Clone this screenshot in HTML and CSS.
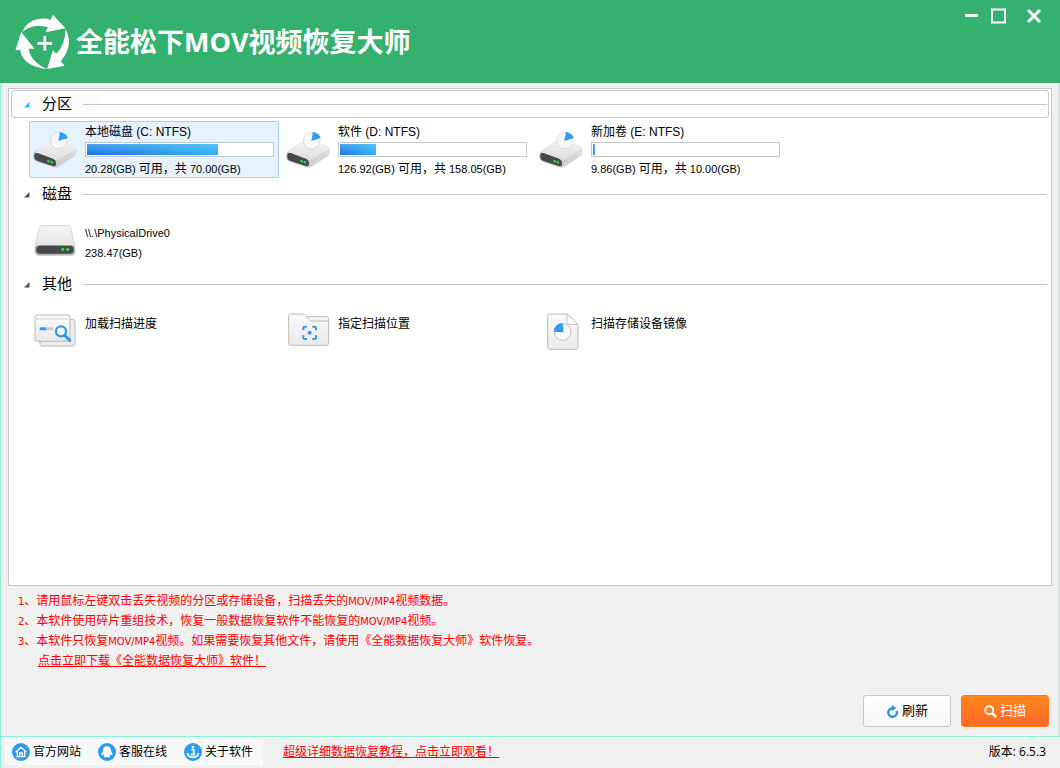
FILE: index.html
```html
<!DOCTYPE html>
<html lang="zh-CN">
<head>
<meta charset="utf-8">
<title>全能松下MOV视频恢复大师</title>
<link rel="stylesheet" href="styles.css">
</head>
<body>
<svg class="defs" aria-hidden="true">
  <defs>
    <linearGradient id="metal" x1="0" y1="0" x2="0" y2="1"><stop offset="0" stop-color="#f6f6f6"/><stop offset="1" stop-color="#dcdcdc"/></linearGradient>
    <linearGradient id="side" x1="0" y1="0" x2="1" y2="0"><stop offset="0" stop-color="#b9b9b9"/><stop offset="1" stop-color="#dedede"/></linearGradient>
    <linearGradient id="paper" x1="0" y1="0" x2="0" y2="1"><stop offset="0" stop-color="#fbfbfb"/><stop offset="1" stop-color="#e9e9e9"/></linearGradient>
    <symbol id="volume" viewBox="0 0 132 114">
      <path d="M1 72q0-9 9-14L56 28q5-3 11-1l54 17q10 4 10 13v6q0 9-7 14l-50 31q-6 4-14 1L12 92Q1 88 1 80z" fill="url(#side)"/>
      <path d="M10 57 56 28q5-3 11-1l54 17q12 5 3 12L78 86q-5 4-12 1L12 68q-8-5-2-11z" fill="url(#metal)"/>
      <path d="M4 73q0-9 10-7l46 17q9 4 9 12v4q0 9-10 6L14 90Q4 86 4 77z" fill="#45484a"/>
      <path d="m43 86 7 2v7l-7-2zM53 89l7 2v7l-7-2z" fill="#35d643"/>
      <circle cx="77" cy="29" r="25" fill="#f7f7f7" stroke="#cfcfcf" stroke-width="2"/>
      <path d="M76 30 81 2q20 6 23 19z" fill="#2f9bee"/>
    </symbol>
    <symbol id="tri" viewBox="0 0 7 7"><path d="M1 6.500 6.500 1v5.500z" fill="currentColor"/></symbol>
  </defs>
</svg>
<div class="window">
  <header class="titlebar">
    <svg class="logo" viewBox="44 38 164 168" aria-hidden="true">
      <g fill="#fff">
        <path d="M65 92Q80 58 113 53 136 49 150 56L157 40 195 81 135 93 142 78Q100 64 65 92z"/>
        <path d="M62 92 45 147 59 145Q65 194 140 203 89 181 85 142L102 142z"/>
        <path d="M140 203 157 147 167 157Q195 130 195 83 222 129 181 180L192 193z"/>
        <path d="M111 122h18v-18h8v18h18v8h-18v18h-8v-18h-18z"/>
      </g>
    </svg>
    <h1 class="title">全能松下<span class="latin">MOV</span>视频恢复大师</h1>
    <div class="controls">
      <button class="control" aria-label="最小化"><svg viewBox="0 0 16 16"><path d="M2 7.500h13" stroke="#fff" stroke-width="3"/></svg></button>
      <button class="control" aria-label="最大化"><svg viewBox="0 0 16 16"><path d="M1 1.500h13v13H1z" fill="none" stroke="#fff" stroke-width="2"/></svg></button>
      <button class="control last" aria-label="关闭"><svg viewBox="0 0 16 16"><path d="m2 2 12 12m0-12L2 14" stroke="#fff" stroke-width="3"/></svg></button>
    </div>
  </header>

  <main class="body">
    <div class="panel">
      <section>
        <button class="heading active"><svg class="tri"><use href="#tri"/></svg><span>分区</span><i class="rule"></i></button>
        <div class="items">
          <button class="item selected">
            <span class="pic"><svg width="44" height="38"><use href="#volume"/></svg></span>
            <span class="info"><span class="name">本地磁盘 (C: NTFS)</span>
            <span class="bar"><span class="fill" style="width:71%"></span></span>
            <span class="size">20.28(GB) <span class="cn">可用，共</span> 70.00(GB)</span></span>
          </button>
          <button class="item">
            <span class="pic"><svg width="44" height="38"><use href="#volume"/></svg></span>
            <span class="info"><span class="name">软件 (D: NTFS)</span>
            <span class="bar"><span class="fill" style="width:19.5%"></span></span>
            <span class="size">126.92(GB) <span class="cn">可用，共</span> 158.05(GB)</span></span>
          </button>
          <button class="item">
            <span class="pic"><svg width="44" height="38"><use href="#volume"/></svg></span>
            <span class="info"><span class="name">新加卷 (E: NTFS)</span>
            <span class="bar"><span class="fill" style="width:1.2%"></span></span>
            <span class="size">9.86(GB) <span class="cn">可用，共</span> 10.00(GB)</span></span>
          </button>
        </div>
      </section>
      <section>
        <button class="heading"><svg class="tri"><use href="#tri"/></svg><span>磁盘</span><i class="rule"></i></button>
        <div class="items">
          <button class="item">
            <span class="pic low"><svg width="42" height="32" viewBox="0 0 126 96">
              <path d="M16 8Q18 2 25 2h76q7 0 9 6l13 56v15q0 12-12 12H15Q3 91 3 79V64z" fill="url(#metal)" stroke="#c4c4c4" stroke-width="2"/>
              <path d="M3 72q0-12 12-12h96q12 0 12 12v7q0 12-12 12H15Q3 91 3 79z" fill="#b5b5b5"/>
              <rect x="7" y="62" width="112" height="24" rx="10" fill="#45484a"/>
              <circle cx="86" cy="73" r="5" fill="#35d643"/><circle cx="101" cy="73" r="5" fill="#35d643"/>
            </svg></span>
            <span class="info lines"><span>\\.\PhysicalDrive0</span><span>238.47(GB)</span></span>
          </button>
        </div>
      </section>
      <section>
        <button class="heading"><svg class="tri"><use href="#tri"/></svg><span>其他</span><i class="rule"></i></button>
        <div class="items">
          <button class="item">
            <span class="pic low"><svg width="42" height="34" viewBox="0 0 126 102">
              <rect x="18" y="17" width="105" height="79" rx="6" fill="#ededed" stroke="#bcbcbc" stroke-width="3"/>
              <rect x="3" y="3" width="105" height="79" rx="6" fill="url(#paper)" stroke="#bcbcbc" stroke-width="3"/>
              <path d="M5 15h101" stroke="#d0d0d0" stroke-width="3"/>
              <path d="M35 40h23v9H35z" fill="#ccc"/><path d="M17 40h19v9H17z" fill="#2f9bee"/>
              <circle cx="81" cy="52" r="15" fill="#fff" stroke="#2f9bee" stroke-width="7"/>
              <path d="m92 64 15 15" stroke="#2f9bee" stroke-width="9" stroke-linecap="round"/>
            </svg></span>
            <span class="info lines"><span class="name">加载扫描进度</span></span>
          </button>
          <button class="item">
            <span class="pic folder"><svg width="42" height="34" viewBox="0 0 126 102">
              <path d="M56 11h60q6 0 6 6v20H56z" fill="#f4f4f4" stroke="#bcbcbc" stroke-width="3"/>
              <path d="M8 3h37q5 0 8 4l11 13q3 4 8 4h44q6 0 6 6v61q0 6-6 6H8q-6 0-6-6V9q0-6 6-6z" fill="url(#paper)" stroke="#bcbcbc" stroke-width="3"/>
              <path d="M46 52v-7q0-4 4-4h7m16 0h7q4 0 4 4v7m0 15v7q0 4-4 4h-7m-16 0h-7q-4 0-4-4v-7" fill="none" stroke="#2f9bee" stroke-width="6"/>
              <circle cx="65" cy="59" r="6" fill="#2f9bee"/>
            </svg></span>
            <span class="info lines"><span class="name">指定扫描位置</span></span>
          </button>
          <button class="item">
            <span class="pic file"><svg width="32" height="37" viewBox="0 0 96 111">
              <path d="M8 3h52l33 31v69q0 6-6 6H8q-6 0-6-6V9q0-6 6-6z" fill="url(#paper)" stroke="#bcbcbc" stroke-width="3"/>
              <path d="M60 3v25q0 6 6 6h27z" fill="#fff" stroke="#c4c4c4" stroke-width="3"/>
              <circle cx="47" cy="57" r="25" fill="#fafafa" stroke="#c4c4c4" stroke-width="3"/>
              <path d="M49 58 20 56Q22 32 47 30z" fill="#2f9bee"/>
            </svg></span>
            <span class="info lines"><span class="name">扫描存储设备镜像</span></span>
          </button>
        </div>
      </section>
    </div>

    <div class="tips">
      <p><span class="latin">1</span>、请用鼠标左键双击丢失视频的分区或存储设备，扫描丢失的<span class="latin">MOV/MP4</span>视频数据。</p>
      <p><span class="latin">2</span>、本软件使用碎片重组技术，恢复一般数据恢复软件不能恢复的<span class="latin">MOV/MP4</span>视频。</p>
      <p><span class="latin">3</span>、本软件只恢复<span class="latin">MOV/MP4</span>视频。如果需要恢复其他文件，请使用《全能数据恢复大师》软件恢复。</p>
      <p class="indent"><a href="#download">点击立即下载《全能数据恢复大师》软件！</a></p>
    </div>

    <div class="actions">
      <button class="btn"><svg width="13" height="13" viewBox="0 0 13 13"><path d="M6.500 3.200A4.300 4.300 0 1 0 10.600 6" fill="none" stroke="#2f8fe0" stroke-width="2.400"/><path d="M6 0v6.200l4.200-3.100z" fill="#2f8fe0"/></svg>刷新</button>
      <button class="btn primary"><svg width="13" height="13" viewBox="0 0 14 14"><circle cx="5.700" cy="5.700" r="4.300" fill="none" stroke="#fff" stroke-width="2"/><path d="m9 9 4 4" stroke="#fff" stroke-width="2.600"/></svg>扫描</button>
    </div>
  </main>

  <footer class="status">
    <nav class="links">
      <a href="#site"><svg viewBox="0 0 54 54"><circle cx="27" cy="27" r="27" fill="#2f9bee"/><path d="m11 27 16-14 16 14M16 25v16h22V25M23 41V30h8v11" fill="none" stroke="#fff" stroke-width="4"/></svg>官方网站</a>
      <a href="#service"><svg viewBox="0 0 54 54"><circle cx="27" cy="27" r="27" fill="#2f9bee"/><path d="M27 10c-9 0-12 7-12 14-5 6-6 13-3 13 2 0 3-2 4-3 1 3 2 4 4 5-5 4 1 6 7 3 6 3 12 1 7-3 2-1 3-2 4-5 1 1 2 3 4 3 3 0 2-7-3-13 0-7-3-14-12-14z" fill="#fff"/></svg>客服在线</a>
      <a href="#about"><svg viewBox="0 0 54 54"><circle cx="27" cy="27" r="27" fill="#2f9bee"/><circle cx="27" cy="12" r="4" fill="#fff"/><path d="M22 20h7v15M20 35h14M11 30q0 13 16 13t16-13" fill="none" stroke="#fff" stroke-width="5"/></svg>关于软件</a>
    </nav>
    <a class="course" href="#course">超级详细数据恢复教程，点击立即观看！</a>
    <span class="version">版本: 6.5.3</span>
  </footer>
</div>
</body>
</html>
```
FILE: styles.css
```css
* { box-sizing: border-box; }
body {
  margin: 0;
  font: 12px/20px "Liberation Sans", "Noto Sans CJK SC", sans-serif;
  color: #000;
}
button { font: inherit; color: inherit; border: 0; background: none; padding: 0; text-align: left; }
svg { display: block; flex: none; }
.defs { position: absolute; width: 0; height: 0; }
.window { display: flex; flex-direction: column; min-height: 100vh; background: #f0f0f0; }

.titlebar { display: flex; align-items: center; height: 83px; padding: 0 18px 0 15px; background: #34b16e; color: #fff; }
.logo { width: 55px; height: 56px; margin-right: 6px; }
.title { flex: 1; margin: 0; font: bold 27px/40px "Noto Sans CJK SC", sans-serif; }
.title .latin { font-family: "Open Sans", sans-serif; }
.controls { display: flex; gap: 12px; align-self: flex-start; padding-top: 8px; }
.control { width: 16px; height: 16px; }
.control.last { margin-left: 7px; }
.control svg { width: 16px; height: 16px; }

.body { flex: 1; display: flex; flex-direction: column; padding: 5px 7px 0; border: solid #8ef0d8; border-width: 0 1px; }
.panel { flex: 1; padding: 1px 2px; border: 1px solid #c6c7c9; background: #fff; }
.heading {
  display: flex; align-items: center; width: 100%; height: 28px; padding: 0 1px 0 11px;
  border: 1px solid transparent; border-radius: 3px; font-size: 15px; color: #000;
}
.heading.active { border-color: #c6c7c9; background: linear-gradient(90deg, #fcfcfc 90px, #fff 90px); }
.tri { width: 7px; height: 7px; margin-right: 12px; color: #555; }
.active .tri { color: #29c0f0; }
.rule { flex: 1; height: 1px; margin-left: 11px; background: #c6c7c9; }
.items { display: grid; grid-template-columns: repeat(auto-fill, 250px); gap: 3px; padding: 3px 18px 2px; }
.item { display: flex; align-items: center; height: 57px; padding: 0 4px 0 3px; border: 1px solid transparent; border-radius: 2px; }
.item.selected { border-color: #a5d1f7; background: #e6f2fd; }
.pic { display: flex; justify-content: center; width: 44px; margin-right: 8px; }
.low { padding-top: 3px; }
.folder { padding: 1px 0 0 2px; }
.file { padding: 3px 0 0 4px; }
.info { flex: 1; display: flex; flex-direction: column; }
.name { font-size: 12px; }
.bar { width: 189px; height: 15px; padding: 1px; border: 1px solid #c6c7c9; background: #fff; }
.fill { display: block; height: 100%; background: linear-gradient(180deg, rgba(110, 200, 245, .6), rgba(110, 200, 245, 0)), linear-gradient(90deg, #1a70e6, #2fb4f3); }
.size { margin-top: 4px; line-height: 16px; font-size: 11px; white-space: nowrap; }
.cn { font-size: 12px; }
.lines { align-self: flex-start; padding-top: 11px; font-size: 11px; line-height: 20px; }
.lines .name { line-height: 22px; }

.tips { padding: 5px 10px 24px; color: #f00; }
.tips p { height: 20px; margin: 0; }
.tips .latin { font-family: "DejaVu Sans Condensed", "DejaVu Sans", sans-serif; font-size: 11px; }
.tips .indent { padding-left: 20px; }
.tips a, .course { color: #f00; }
.actions { display: flex; justify-content: flex-end; gap: 10px; padding: 0 3px 9px; }
.btn {
  display: flex; align-items: center; justify-content: center; gap: 3px; width: 88px; height: 32px;
  border: 1px solid #c6c7c9; border-radius: 3px; background: linear-gradient(#fff, #f7f7f7); font-size: 13px;
}
.primary { border-color: #ff7a20; background: linear-gradient(#ff861f, #ff6a26); color: #fff; }

.status { display: flex; align-items: center; height: 32px; padding: 0 14px 2px 4px; border: solid #8ef0d8; border-width: 1px 0 0 1px; }
.links { display: flex; gap: 17px; height: 26px; padding: 0 10px 0 7px; background: #f6f8fa; }
.links a { display: flex; align-items: center; gap: 3px; color: #000; text-decoration: none; }
.links svg { width: 18px; height: 18px; }
.course { margin-left: 20px; }
.version { margin-left: auto; font-family: "Open Sans", "Noto Sans CJK SC", sans-serif; }
```
